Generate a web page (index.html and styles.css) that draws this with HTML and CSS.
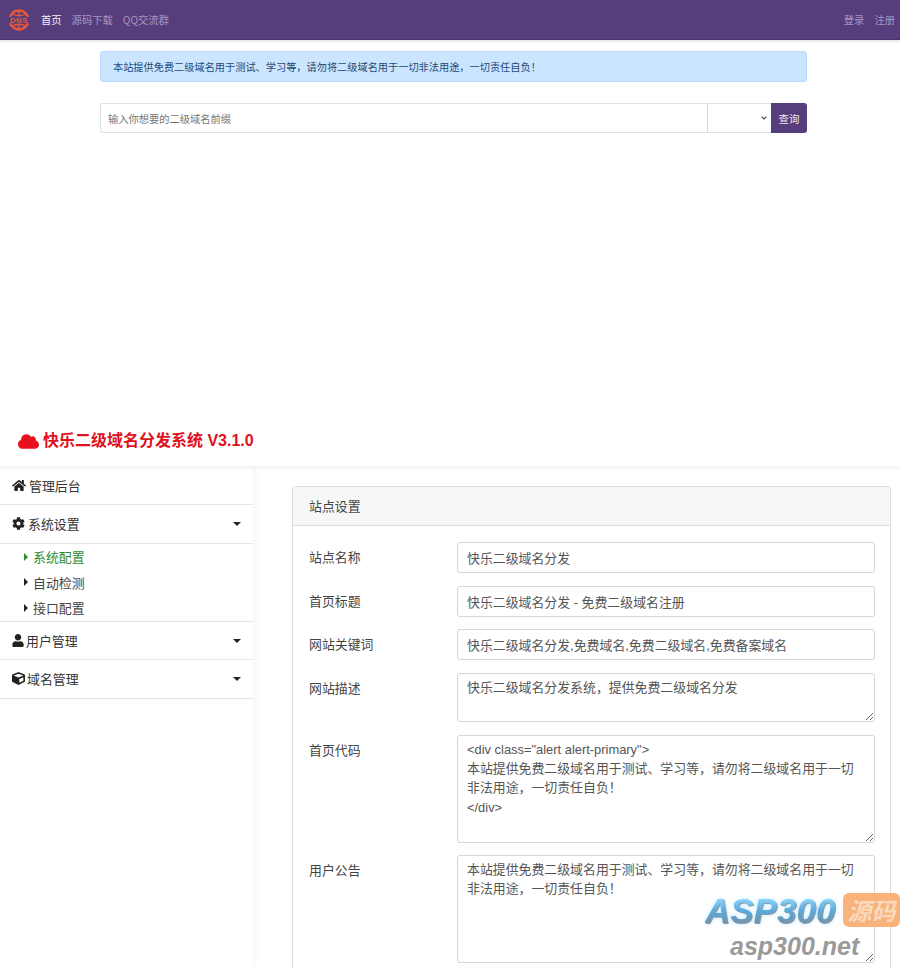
FILE: index.html
```html
<!DOCTYPE html>
<html lang="zh">
<head>
<meta charset="utf-8">
<title>快乐二级域名分发系统</title>
<link rel="stylesheet" href="styles.css">
</head>
<body>
<section class="front">
  <nav class="navbar">
    <svg class="logo" viewBox="0 0 24 24" aria-hidden="true">
      <circle cx="12" cy="12" r="10.3" fill="none" stroke="#e9573a" stroke-width="2.6"/>
      <path d="M12 2v20M5 5.5c3.5 2.4 10.5 2.4 14 0M5 18.5c3.5-2.4 10.5-2.4 14 0" fill="none" stroke="#e9573a" stroke-width="1.5"/>
      <rect x="0" y="8.5" width="24" height="7" fill="#563d7c"/>
      <text x="12" y="15.4" class="logo-text">DNS</text>
    </svg>
    <a class="nav-link nav-active">首页</a>
    <a class="nav-link">源码下载</a>
    <a class="nav-link">QQ交流群</a>
    <span class="nav-spacer"></span>
    <a class="nav-link">登录</a>
    <a class="nav-link">注册</a>
  </nav>
  <div class="front-body">
    <div class="alert">本站提供免费二级域名用于测试、学习等，请勿将二级域名用于一切非法用途，一切责任自负！</div>
    <div class="query">
      <input class="query-input" placeholder="输入你想要的二级域名前缀">
      <select class="query-select"><option></option></select>
      <button class="query-btn">查询</button>
    </div>
  </div>
</section>
<section class="admin">
  <header class="admin-head">
    <svg class="cloud" viewBox="0 0 640 512" aria-hidden="true"><path d="M537.6 226.6c4.1-10.7 6.4-22.4 6.4-34.6 0-53-43-96-96-96-19.7 0-38.1 6-53.3 16.2C367 64.2 315.3 32 256 32c-88.4 0-160 71.6-160 160 0 2.7.1 5.4.2 8.1C40.2 219.8 0 273.2 0 336c0 79.5 64.5 144 144 144h368c70.7 0 128-57.3 128-128 0-61.9-44-113.6-102.4-125.4z"/></svg>
    <h1 class="admin-title">快乐二级域名分发系统 V3.1.0</h1>
  </header>
  <div class="admin-body">
    <aside class="sidebar">
      <div class="side-item side-first">
        <svg class="side-icon icon-home" viewBox="0 0 576 512" aria-hidden="true"><path d="M280.37 148.26L96 300.11V464a16 16 0 0 0 16 16l112.06-.29a16 16 0 0 0 15.92-16V368a16 16 0 0 1 16-16h64a16 16 0 0 1 16 16v95.64a16 16 0 0 0 16 16.05L464 480a16 16 0 0 0 16-16V300L295.67 148.26a12.19 12.19 0 0 0-15.3 0zM571.6 251.47L488 182.56V44.05a12 12 0 0 0-12-12h-56a12 12 0 0 0-12 12v72.61L318.47 43a48 48 0 0 0-61 0L4.34 251.47a12 12 0 0 0-1.6 16.9l25.5 31A12 12 0 0 0 45.15 301l235.22-193.74a12.19 12.19 0 0 1 15.3 0L530.9 301a12 12 0 0 0 16.9-1.6l25.5-31a12 12 0 0 0-1.7-16.93z"/></svg>
        <span>管理后台</span>
      </div>
      <div class="side-item">
        <svg class="side-icon icon-cog" viewBox="0 0 512 512" aria-hidden="true"><path d="M487.4 315.7l-42.6-24.6c4.3-23.2 4.3-47 0-70.2l42.6-24.6c4.9-2.8 7.1-8.6 5.5-14-11.1-35.6-30-67.8-54.7-94.6-3.8-4.1-10-5.1-14.8-2.3L380.8 110c-17.9-15.4-38.5-27.3-60.8-35.1V25.8c0-5.6-3.9-10.5-9.4-11.7-36.7-8.2-74.3-7.8-109.2 0-5.5 1.2-9.4 6.1-9.4 11.7V75c-22.2 7.9-42.8 19.8-60.8 35.1L88.7 85.5c-4.9-2.8-11-1.9-14.8 2.3-24.7 26.7-43.6 58.9-54.7 94.6-1.7 5.4.6 11.2 5.5 14L67.3 221c-4.3 23.2-4.3 47 0 70.2l-42.6 24.6c-4.9 2.8-7.1 8.6-5.5 14 11.1 35.6 30 67.8 54.7 94.6 3.8 4.1 10 5.1 14.8 2.3l42.6-24.6c17.9 15.4 38.5 27.3 60.8 35.1v49.2c0 5.6 3.9 10.5 9.4 11.7 36.7 8.2 74.3 7.8 109.2 0 5.5-1.2 9.4-6.1 9.4-11.7v-49.2c22.2-7.9 42.8-19.8 60.8-35.1l42.6 24.6c4.9 2.8 11 1.9 14.8-2.3 24.7-26.7 43.6-58.9 54.7-94.6 1.5-5.5-.7-11.3-5.6-14.1zM256 336c-44.1 0-80-35.9-80-80s35.9-80 80-80 80 35.9 80 80-35.9 80-80 80z"/></svg>
        <span>系统设置</span><i class="caret-down"></i>
      </div>
      <ul class="submenu">
        <li class="sub-item sub-active"><i class="caret-right"></i>系统配置</li>
        <li class="sub-item"><i class="caret-right"></i>自动检测</li>
        <li class="sub-item"><i class="caret-right"></i>接口配置</li>
      </ul>
      <div class="side-item side-short">
        <svg class="side-icon icon-user" viewBox="0 0 448 512" aria-hidden="true"><path d="M224 256c70.7 0 128-57.3 128-128S294.7 0 224 0 96 57.3 96 128s57.3 128 128 128zm89.6 32h-16.7c-22.2 10.2-46.9 16-72.9 16s-50.6-5.8-72.9-16h-16.7C60.2 288 0 348.2 0 422.4V464c0 26.5 21.5 48 48 48h352c26.5 0 48-21.5 48-48v-41.6c0-74.2-60.2-134.4-134.4-134.4z"/></svg>
        <span>用户管理</span><i class="caret-down"></i>
      </div>
      <div class="side-item">
        <svg class="side-icon icon-cube" viewBox="0 0 512 512" aria-hidden="true"><path d="M239.1 6.3l-208 78c-18.7 7-31.1 25-31.1 45v225.1c0 18.2 10.3 34.8 26.5 42.9l208 104c13.5 6.8 29.4 6.8 42.9 0l208-104c16.3-8.1 26.5-24.8 26.5-42.9V129.3c0-20-12.4-37.9-31.1-44.9l-208-78C262 2.2 250 2.2 239.1 6.3zM256 68.4l192 72v1.1l-192 78-192-78v-1.1l192-72zm32 356V275.5l160-65v133.9l-160 80z"/></svg>
        <span>域名管理</span><i class="caret-down"></i>
      </div>
    </aside>
    <main class="content">
      <div class="card">
        <div class="card-head">站点设置</div>
        <form class="card-body">
          <label class="field-label">站点名称</label>
          <input class="control" value="快乐二级域名分发">
          <label class="field-label">首页标题</label>
          <input class="control" value="快乐二级域名分发 - 免费二级域名注册">
          <label class="field-label">网站关键词</label>
          <input class="control" value="快乐二级域名分发,免费域名,免费二级域名,免费备案域名">
          <label class="field-label">网站描述</label>
          <textarea class="control area-small">快乐二级域名分发系统，提供免费二级域名分发</textarea>
          <label class="field-label">首页代码</label>
          <textarea class="control area-large">&lt;div class="alert alert-primary"&gt;
本站提供免费二级域名用于测试、学习等，请勿将二级域名用于一切非法用途，一切责任自负！
&lt;/div&gt;</textarea>
          <label class="field-label">用户公告</label>
          <textarea class="control area-large">本站提供免费二级域名用于测试、学习等，请勿将二级域名用于一切非法用途，一切责任自负！</textarea>
        </form>
      </div>
    </main>
  </div>
</section>
<div class="watermark">
  <span class="wm-asp">ASP300</span>
  <span class="wm-badge">源码</span>
  <span class="wm-url">asp300.net</span>
</div>
</body>
</html>
```
FILE: styles.css
```css
* { box-sizing: border-box; }
html, body { margin: 0; height: 968px; overflow: hidden; background: #fff; }
body {
  position: relative;
  font-family: "Noto Sans CJK SC", "Noto Sans", sans-serif;
  font-size: 12.9px;
  color: #333;
}

/* Front page */
.front { height: 420px; }
.navbar {
  height: 40px;
  display: flex;
  align-items: center;
  gap: 10px;
  padding: 0 5px 0 8px;
  background: #563d7c;
  box-shadow: 0 1px 3px rgba(0, 0, 0, .15);
  border-bottom: 1px solid #49346a;
}
.logo { width: 22px; height: 22px; margin-right: 1px; }
.logo-text { font: 700 8.5px "Liberation Sans", sans-serif; fill: #e9573a; text-anchor: middle; letter-spacing: .6px; }
.nav-link { font-size: 10.3px; color: #a897c0; white-space: nowrap; }
.nav-active { color: #f3eff7; }
.nav-spacer { flex: 1; }
.front-body { width: 707px; margin-left: 100px; padding-top: 11px; }
.alert {
  height: 31px;
  padding: 0 12px;
  line-height: 30px;
  font-size: 10.2px;
  color: #1c4a78;
  background: #cce5ff;
  border: 1px solid #b8daff;
  border-radius: 3px;
}
.query { display: flex; height: 30px; margin-top: 21px; }
.query-input {
  flex: 1;
  min-width: 0;
  padding: 0 7px;
  font: 10.25px "Noto Sans CJK SC", sans-serif;
  border: 1px solid #e0e0e0;
  border-right: 0;
  border-radius: 3px 0 0 3px;
  outline: 0;
}
.query-input::placeholder { color: #777; }
.query-select {
  width: 64px;
  appearance: none;
  -webkit-appearance: none;
  border: 1px solid #e0e0e0;
  border-left-color: #d8d8d8;
  border-right: 0;
  border-radius: 0;
  background: #fff url("data:image/svg+xml,%3Csvg xmlns='http://www.w3.org/2000/svg' viewBox='0 0 6 4'%3E%3Cpath d='M.6.6 3 3l2.4-2.4' fill='none' stroke='%23444' stroke-width='1.1'/%3E%3C/svg%3E") no-repeat right 4px center / 6px 4px;
  color: #333;
  font-size: 10.5px;
}
.query-btn {
  width: 36px;
  padding: 0;
  font: 10.5px "Noto Sans CJK SC", sans-serif;
  color: #eee8f4;
  background: #563d7c;
  border: 0;
  border-radius: 0 3px 3px 0;
}

/* Admin */
.admin { height: 548px; }
.admin-head {
  height: 46px;
  display: flex;
  align-items: center;
  gap: 4px;
  padding: 0 0 4px 18px;
  background: #fff;
  box-shadow: 0 2px 4px rgba(0, 0, 0, .07);
  position: relative;
  z-index: 1;
}
.cloud { width: 21px; height: 17px; fill: #e8101c; }
.admin-title {
  margin: 0;
  font: 700 16px/1 "Liberation Sans", "Noto Sans CJK SC", sans-serif;
  color: #e01020;
}
.admin-body { display: flex; height: 502px; overflow: hidden; }
.sidebar {
  width: 253px;
  flex: none;
  background: #fff;
  box-shadow: 1px 0 6px rgba(0, 0, 0, .06);
}
.side-item {
  display: flex;
  align-items: center;
  height: 39px;
  padding: 0 12px 1px;
  border-bottom: 1px solid #e4e4e4;
  color: #333;
}
.side-first { padding-bottom: 0; }
.side-short { height: 38px; padding-bottom: 0; }
.side-icon { height: 13px; fill: #222; flex: none; margin-right: 3px; }
.icon-home { width: 14px; }
.icon-cog { width: 13px; }
.icon-user { width: 12px; margin-right: 2px; }
.icon-cube { width: 13px; margin-right: 2px; }
.caret-down {
  margin: 1.5px 0 0 auto;
  width: 0;
  height: 0;
  border-left: 4.5px solid transparent;
  border-right: 4.5px solid transparent;
  border-top: 4.5px solid #222;
}
.submenu {
  margin: 0;
  padding: 0;
  list-style: none;
  height: 78px;
  border-bottom: 1px solid #e4e4e4;
}
.sub-item {
  display: flex;
  align-items: center;
  height: 25.6px;
  padding-left: 24px;
  color: #444;
}
.sub-active { color: #2e8b2e; }
.caret-right {
  width: 0;
  height: 0;
  margin-right: 5px;
  border-top: 4px solid transparent;
  border-bottom: 4px solid transparent;
  border-left: 4px solid #222;
}
.sub-active .caret-right { border-left-color: #2e8b2e; }
.content { flex: 1; padding: 20px 9px 0 39px; min-width: 0; overflow: hidden; }
.card {
  height: 600px;
  background: #fff;
  border: 1px solid #ddd;
  border-radius: 3px;
}
.card-head {
  height: 39px;
  padding: 0 16px;
  line-height: 38px;
  background: #f7f7f7;
  border-bottom: 1px solid #ddd;
  color: #444;
}
.card-body {
  display: grid;
  grid-template-columns: 148px 1fr;
  row-gap: 12.5px;
  padding: 16px 15px 0 16px;
  align-items: start;
}
.field-label { line-height: 29px; color: #444; }
.control {
  display: block;
  width: 100%;
  height: 31px;
  margin: 0;
  padding: 5px 9px;
  font: 12.9px/19.35px "Liberation Sans", "Noto Sans CJK SC", sans-serif;
  color: #555;
  background: #fff;
  border: 1px solid #d6d6d6;
  border-radius: 3px;
  outline: 0;
}
textarea.control { overflow: hidden; resize: vertical; padding: 4px 18px 5px 9px; }
.area-small { height: 49.5px; }
textarea.area-large { height: 108px; }

/* Watermark sits over the page */
.watermark {
  position: absolute;
  left: 700px;
  top: 888px;
  width: 200px;
  height: 76px;
  pointer-events: none;
  z-index: 2;
}
.wm-asp {
  position: absolute;
  left: 5px;
  top: 1px;
  font: italic 700 35px/44px "Liberation Sans", sans-serif;
  background: linear-gradient(180deg, #8fd6fa 20%, #5aa9dc 50%, #7a8d9c 85%);
  -webkit-background-clip: text;
  background-clip: text;
  color: transparent;
  filter: drop-shadow(1px 1px 0 #8a9aa6) drop-shadow(0 0 2px #bfeaff);
}
.wm-badge {
  position: absolute;
  left: 143px;
  top: 5px;
  width: 57px;
  height: 34px;
  text-align: center;
  font: italic 700 24px/33px "Noto Sans CJK SC", sans-serif;
  color: #fbd9bd;
  background: #f8b27a;
  border-radius: 6px;
}
.wm-url {
  position: absolute;
  left: 30px;
  top: 43px;
  font: italic 700 25px/30px "Liberation Sans", sans-serif;
  color: #9a9a9a;
}
```
